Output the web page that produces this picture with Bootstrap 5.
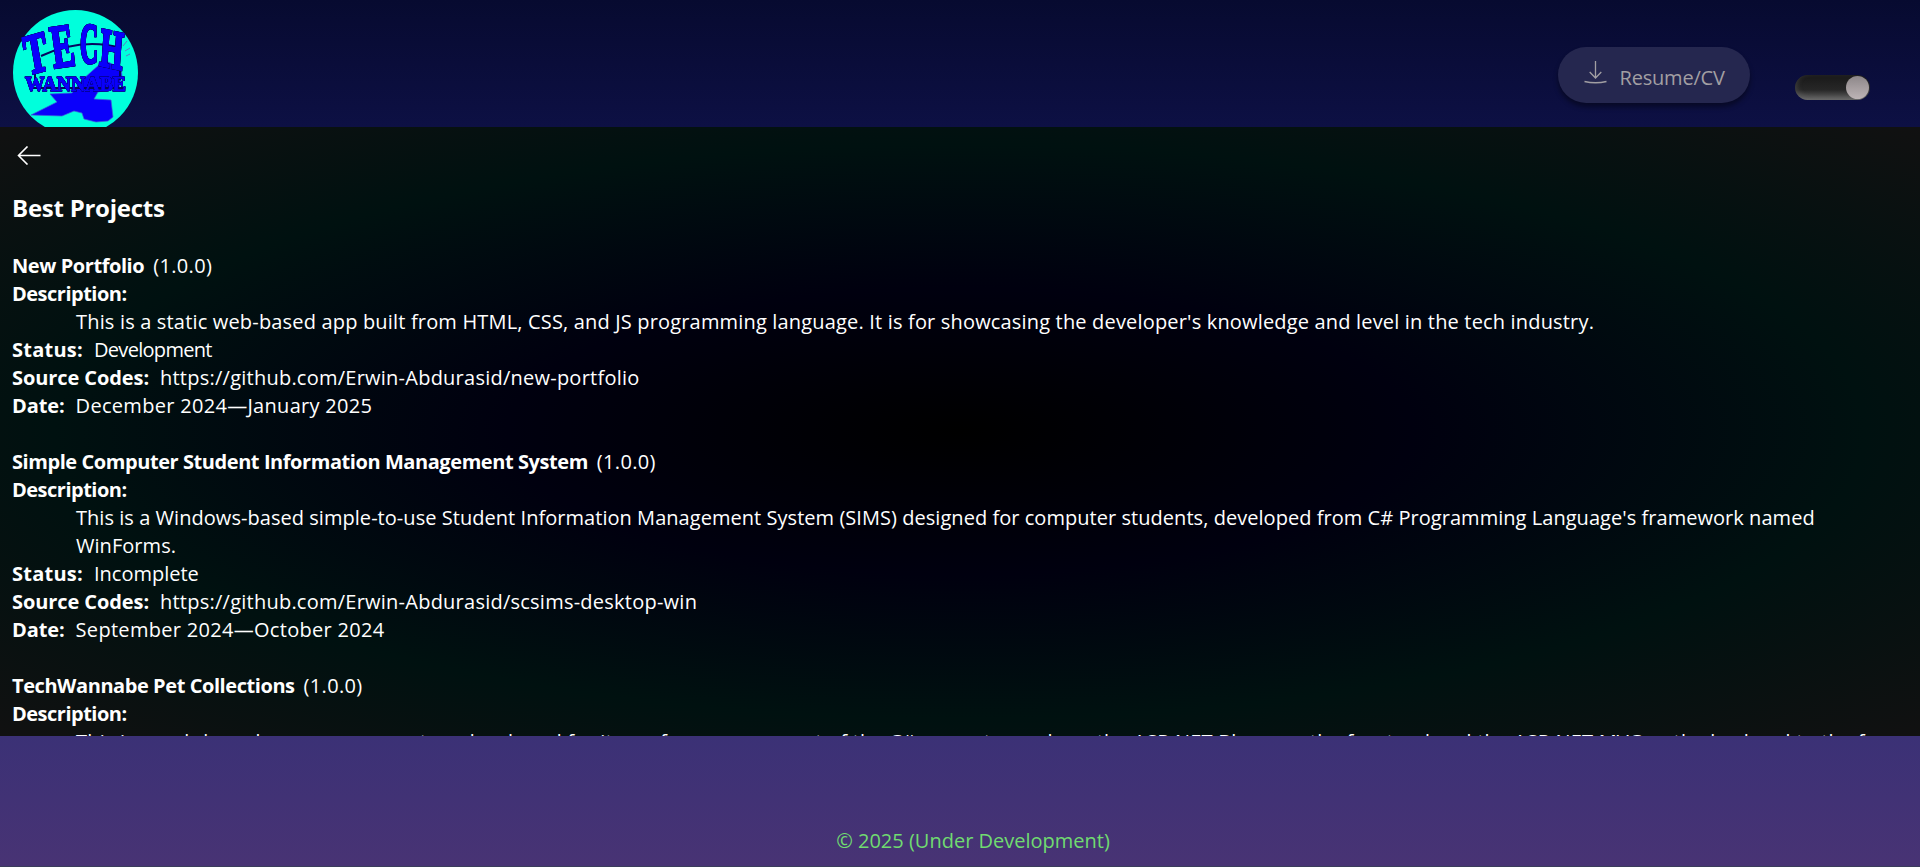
<!DOCTYPE html>
<html lang="en" data-bs-theme="dark">
<head>
<meta charset="utf-8">
<meta name="viewport" content="width=device-width, initial-scale=1">
<title>Best Projects</title>
<link href="https://cdn.jsdelivr.net/npm/bootstrap@5.3.0/dist/css/bootstrap.min.css" rel="stylesheet">
<style>
body{font:400 20px/28px "Open Sans",sans-serif;color:#fff;background:#2e2f52}
.site-head{height:127px;padding:10px 50px 0 13px;background:linear-gradient(#070a30,#0d1044)}
.logo{width:125px;height:125px}
.logo-letters{filter:drop-shadow(0 0 .7px #000030) drop-shadow(0 0 .6px #000030)}
.resume{width:192px;height:56px;margin:37px 45px 0 0;border-radius:28px;background:#25274f;color:#a29fa3;box-shadow:0 4px 5px rgba(0,0,0,.4);padding:0 25px 0 26px;border:0}
.resume:hover{background:#2d2f58;color:#c5c3c5}
.resume svg{margin-top:13px}
.resume span{margin:17px 0 0 12.500px;font-size:20px;line-height:28px;letter-spacing:-.2px}
.toggle{width:75px;height:25px;margin-top:65px;padding:1px;border-radius:13px;background:linear-gradient(#1c1c1c 15%,#272727 60%,#666);box-shadow:inset 2px -2px 5px rgba(120,120,120,.3)}
.knob{width:23px;height:23px;background:linear-gradient(#8d8789,#bdb4b6)}
.projects{height:609px;padding:19px 13px 0;background:radial-gradient(#000,#00000f,#001110,#111)}
.back{width:24px;height:19px;margin-left:4px}
h1{font-size:24px;line-height:32px;letter-spacing:-.25px;margin:27px 0 28px -1px}
.project{margin-bottom:28px}
.project p{margin:0}
.project b{margin-left:-1px}
.desc{padding-left:63px}
.row-line{display:flex;white-space:pre}
.row-line b{margin-right:11px}
.name b{margin-right:9px}
.l-name{letter-spacing:-.43px}.l-ver{letter-spacing:.34px}.l-desc{letter-spacing:-.5px}
.l-stat{letter-spacing:.25px}.l-src{letter-spacing:-.09px}.l-date{letter-spacing:-.1px}
.l-url{letter-spacing:.24px}.l-when{letter-spacing:.3px}.l-dev{letter-spacing:-.7px}
.l-static{letter-spacing:.172px}.l-win{letter-spacing:.044px}.l-pet{letter-spacing:.2px}
.site-foot{height:131px;padding:91px 0 0 26px;background:linear-gradient(#3b3176,#483374);color:#70db70;border-bottom:1px solid #3b3d5c}
</style>
</head>
<body class="vh-100 overflow-hidden d-flex flex-column">
<header class="site-head d-flex align-items-start overflow-hidden flex-shrink-0">
  <svg class="logo flex-shrink-0" viewBox="13 10 125 125" font-family="Liberation Serif" font-weight="700">
    <circle cx="75.5" cy="72.5" r="62.500" fill="#00ffdc"/>
    <path d="M31 115 57 102 50 94 72 93 82 80 100 64 108 62 121 68 122 76 119 88 98 92 94 99 111 100 113 117 108 121 96 122 84 119 82 113 74 111 62 116Z" fill="#0a00fb" stroke="#3f58d8" stroke-width=".7"/>
    <path d="M41 56Q82 37 121 48M35 70v10M120 70v10M30 88H124" fill="none" stroke="#050560" stroke-width="2"/>
    <path d="m120 42 3-5m0 9 4-5m-2 10 5-3m-4 8 4-2" fill="none" stroke="#5c78c8" stroke-width="1"/>
    <g class="logo-letters" fill="#0a00fb" stroke="#0a00fb" stroke-width="2.600">
      <text transform="translate(28 75) rotate(-16) skewX(-6) scale(.62 1)" font-size="56">T</text>
      <text transform="translate(54 68) rotate(-8) scale(.56 1)" font-size="61">E</text>
      <text transform="translate(80 62.500) scale(.44 1)" font-size="57">C</text>
      <text transform="translate(99 65) rotate(12) skewX(8) scale(.56 1)" font-size="54">H</text>
      <text x="25" y="91" font-size="21" stroke-width="1" textLength="101" lengthAdjust="spacingAndGlyphs">WANNABE</text>
    </g>
  </svg>
  <button class="resume btn d-flex align-items-start ms-auto">
    <svg class="flex-shrink-0" width="23" height="24" viewBox="0 0 23 24" fill="none" stroke="currentColor" stroke-width="1.300"><path d="M11.500 1v17M5.700 12l5.800 6 5.800-6M.5 21.500Q11.500 24 22.500 21.500"/></svg>
    <span class="text-nowrap">Resume/CV</span>
  </button>
  <div class="toggle d-flex justify-content-end" role="switch" aria-checked="true"><div class="knob rounded-circle"></div></div>
</header>
<main class="projects overflow-hidden flex-shrink-0">
  <svg class="back d-block" viewBox="0 0 24 19" fill="none" stroke="#fff" stroke-width="1.600"><path d="M23.500 9.500H1.500M10.500 .5 1.500 9.500 10.500 18.500"/></svg>
  <h1 class="fw-bold">Best Projects</h1>
  <section class="project">
    <div class="row-line name"><b class="l-name">New Portfolio</b><span class="l-ver">(1.0.0)</span></div>
    <b class="l-desc">Description:</b>
    <p class="desc l-static">This is a static web-based app built from HTML, CSS, and JS programming language. It is for showcasing the developer's knowledge and level in the tech industry.</p>
    <div class="row-line"><b class="l-stat">Status:</b><span class="l-dev">Development</span></div>
    <div class="row-line"><b class="l-src">Source Codes:</b><span class="l-url">https://github.com/Erwin-Abdurasid/new-portfolio</span></div>
    <div class="row-line"><b class="l-date">Date:</b><span class="l-when">December 2024—January 2025</span></div>
  </section>
  <section class="project">
    <div class="row-line name"><b class="l-name">Simple Computer Student Information Management System</b><span class="l-ver">(1.0.0)</span></div>
    <b class="l-desc">Description:</b>
    <p class="desc l-win">This is a Windows-based simple-to-use Student Information Management System (SIMS) designed for computer students, developed from C# Programming Language's framework named WinForms.</p>
    <div class="row-line"><b class="l-stat">Status:</b><span>Incomplete</span></div>
    <div class="row-line"><b class="l-src">Source Codes:</b><span class="l-url">https://github.com/Erwin-Abdurasid/scsims-desktop-win</span></div>
    <div class="row-line"><b class="l-date">Date:</b><span class="l-when">September 2024—October 2024</span></div>
  </section>
  <section class="project">
    <div class="row-line name"><b class="l-name">TechWannabe Pet Collections</b><span class="l-ver">(1.0.0)</span></div>
    <b class="l-desc">Description:</b>
    <p class="desc l-pet text-nowrap">This is a web-based e-commerce system developed for its performance as part of the C# ecosystem, where the ASP.NET Blazor as the frontend and the ASP.NET MVC as the backend to the f</p>
  </section>
</main>
<footer class="site-foot text-center flex-shrink-0">© 2025 (Under Development)</footer>
<script src="https://cdn.jsdelivr.net/npm/bootstrap@5.3.0/dist/js/bootstrap.bundle.min.js"></script>
</body>
</html>
